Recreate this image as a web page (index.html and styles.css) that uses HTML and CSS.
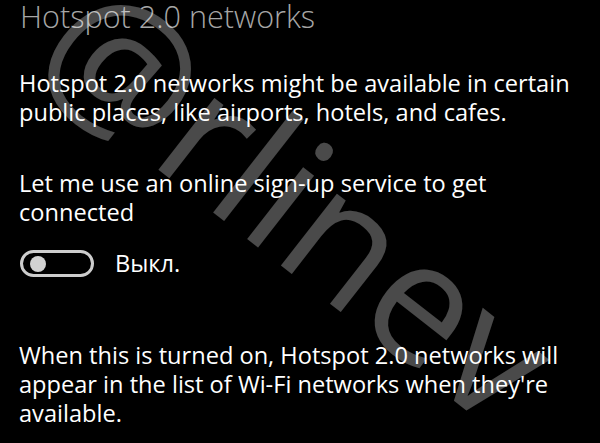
FILE: index.html
```html
<!DOCTYPE html>
<html lang="en">
<head>
<meta charset="utf-8">
<title>Hotspot 2.0 networks</title>
<link rel="stylesheet" href="styles.css">
</head>
<body>
<main class="page">
  <h1 class="title">Hotspot 2.0 networks</h1>
  <p class="text first">Hotspot 2.0 networks might be available in certain public places, like airports, hotels, and cafes.</p>
  <p class="text second">Let me use an online sign-up service to get connected</p>
  <div class="toggle-row">
    <span class="toggle"><span class="knob"></span></span>
    <span class="toggle-label">Выкл.</span>
  </div>
  <p class="text third">When this is turned on, Hotspot 2.0 networks will appear in the list of Wi-Fi networks when they're available.</p>
  <svg class="watermark" width="600" height="443" viewBox="0 0 600 443" aria-hidden="true">
    <text x="27" y="67" transform="rotate(38 27 67)">@rlinev</text>
  </svg>
</main>
</body>
</html>
```
FILE: styles.css
```css
html, body {
  margin: 0;
  padding: 0;
  background: #000;
}
.page {
  position: relative;
  width: 600px;
  height: 443px;
  overflow: hidden;
  box-sizing: border-box;
  padding: 0 12px 0 19px;
  font-family: "Open Sans", "Noto Sans", sans-serif;
  color: #fff;
}
.title {
  margin: 0;
  font-size: 30.6px;
  font-weight: 300;
  line-height: 33px;
  color: #a6a6a6;
  padding-left: 1px;
}
.text {
  margin: 0;
  font-size: 23.6px;
  line-height: 29px;
  font-weight: 400;
}
.first { margin-top: 36px; }
.second { margin-top: 42px; }
.third { margin-top: 63px; }
.toggle-row {
  margin-top: 22px;
  display: flex;
  align-items: center;
  gap: 21px;
  padding-left: 1px;
}
.toggle {
  box-sizing: border-box;
  width: 74px;
  height: 27px;
  border: 3px solid #cdcdcd;
  border-radius: 14px;
  display: flex;
  align-items: center;
  padding-left: 7px;
}
.knob {
  width: 16px;
  height: 16px;
  border-radius: 50%;
  background: #d2d2d2;
}
.toggle-label {
  font-size: 23.6px;
  line-height: 29px;
}
.watermark {
  position: absolute;
  left: 0;
  top: 0;
  pointer-events: none;
}
.watermark text {
  font-family: "Open Sans", "Noto Sans", sans-serif;
  font-size: 170px;
  font-weight: 400;
  fill: rgba(255, 255, 255, 0.29);
}
```
